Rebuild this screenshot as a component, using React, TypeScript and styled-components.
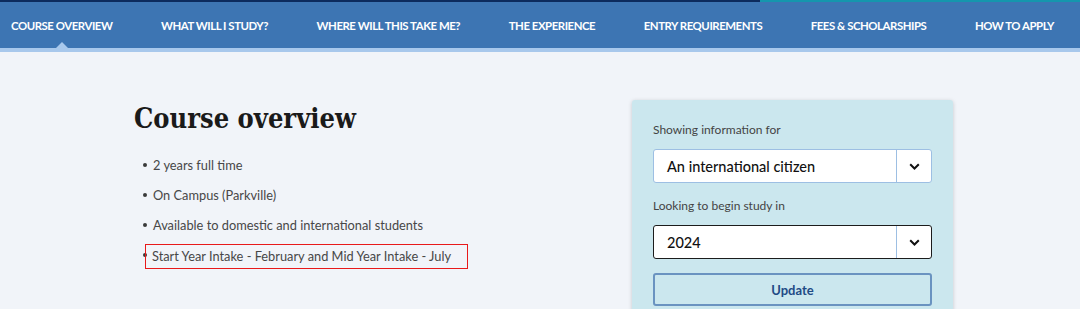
import React from "react";
import styled, { createGlobalStyle } from "styled-components";

const Global = createGlobalStyle`
  html, body { margin: 0; padding: 0; }
  body { background: #f1f4f9; font-family: "Lato", "Liberation Sans", sans-serif; overflow: hidden; }
  * { box-sizing: border-box; }
`;

const Page = styled.div`
  width: 1080px;
  height: 309px;
  overflow: hidden;
`;

const TopStrip = styled.div`
  display: grid;
  grid-template-columns: 760px 1fr;
  height: 2px;
`;
const StripPart = styled.div<{ $c: string }>`
  background: ${(p) => p.$c};
`;

const Nav = styled.nav`
  height: 46px;
  background: #3d75b3;
  border-bottom: 4px solid #a8c8ec;
  box-sizing: content-box;
  display: flex;
  align-items: center;
  justify-content: space-between;
  padding: 0 26px 0 11px;
`;

const NavItem = styled.a<{ $active?: boolean }>`
  position: relative;
  color: #fff;
  font-family: "Lato", sans-serif;
  font-weight: 700;
  font-size: 11.4px;
  letter-spacing: -0.45px;
  text-transform: uppercase;
  white-space: nowrap;
  &::after {
    content: "";
    display: ${(p) => (p.$active ? "block" : "none")};
    position: absolute;
    left: 50%;
    bottom: -17px;
    transform: translateX(-50%);
    border-left: 7px solid transparent;
    border-right: 7px solid transparent;
    border-bottom: 7px solid #a8c8ec;
  }
`;

const Body = styled.div`
  display: flex;
  padding: 48px 0 0 134px;
`;

const Main = styled.div`
  width: 498px;
`;

const Heading = styled.h1`
  margin: 0 0 18px;
  font-family: "DejaVu Serif Condensed", "DejaVu Serif", serif;
  font-stretch: condensed;
  font-weight: 700;
  font-size: 27px;
  line-height: 37px;
  color: #1a1a1a;
`;

const List = styled.ul`
  list-style: none;
  margin: 0;
  padding: 0;
  display: flex;
  flex-direction: column;
  gap: 10px;
`;

const Item = styled.li`
  display: flex;
  align-items: center;
  height: 20px;
  font-size: 12.8px;
  color: #474747;
  &::before {
    content: "";
    width: 4px;
    height: 4px;
    border-radius: 50%;
    background: #3a3a3a;
    margin: 0 6px 0 9px;
    flex: none;
  }
`;

const Highlight = styled.span`
  display: inline-flex;
  align-items: center;
  height: 25px;
  border: 1.5px solid #e8191a;
  padding: 0 16px 0 6px;
  margin-left: -8px;
  margin-top: 2px;
`;

const Card = styled.aside`
  width: 321px;
  height: 260px;
  background: #cbe7ee;
  border-radius: 3px;
  box-shadow: 0 1px 4px rgba(0, 0, 0, 0.18);
  padding: 21px 21px;
`;

const Label = styled.div`
  font-size: 12px;
  color: #444;
  line-height: 18px;
  margin: 0 0 10px;
`;

const Select = styled.div<{ $focus?: boolean }>`
  display: flex;
  height: 34px;
  background: #fff;
  border: 1px solid ${(p) => (p.$focus ? "#1c1c1c" : "#9dbfe3")};
  border-radius: 3px;
  margin-bottom: 14px;
`;

const SelectText = styled.div`
  flex: 1;
  display: flex;
  align-items: center;
  padding-left: 13px;
  font-size: 14.5px;
  font-weight: 500;
  color: #111;
`;

const Chevron = styled.div`
  width: 35px;
  border-left: 1px solid #9dbfe3;
  display: flex;
  align-items: center;
  justify-content: center;
`;

const Button = styled.button`
  display: block;
  width: 100%;
  height: 33px;
  background: transparent;
  border: 2px solid #6a93c0;
  border-radius: 3px;
  font-family: "Lato", sans-serif;
  font-weight: 700;
  font-size: 13px;
  color: #1f4b85;
`;

const ChevronIcon = () => (
  <svg width="11" height="7" viewBox="0 0 11 7">
    <path d="M1.2 1.2 L5.5 5.5 L9.8 1.2" fill="none" stroke="#111" strokeWidth="2" />
  </svg>
);

const navItems = [
  "Course overview",
  "What will I study?",
  "Where will this take me?",
  "The experience",
  "Entry requirements",
  "Fees & scholarships",
  "How to apply",
];

export default function App() {
  return (
    <Page>
      <Global />
      <TopStrip>
        <StripPart $c="#0c2b5e" />
        <StripPart $c="#1596ad" />
      </TopStrip>
      <Nav>
        {navItems.map((n, i) => (
          <NavItem key={n} $active={i === 0}>
            {n}
          </NavItem>
        ))}
      </Nav>
      <Body>
        <Main>
          <Heading>Course overview</Heading>
          <List>
            <Item>2 years full time</Item>
            <Item>On Campus (Parkville)</Item>
            <Item>Available to domestic and international students</Item>
            <Item>
              <Highlight>Start Year Intake - February and Mid Year Intake - July</Highlight>
            </Item>
          </List>
        </Main>
        <Card>
          <Label>Showing information for</Label>
          <Select>
            <SelectText>An international citizen</SelectText>
            <Chevron>
              <ChevronIcon />
            </Chevron>
          </Select>
          <Label>Looking to begin study in</Label>
          <Select $focus>
            <SelectText>2024</SelectText>
            <Chevron>
              <ChevronIcon />
            </Chevron>
          </Select>
          <Button>Update</Button>
        </Card>
      </Body>
    </Page>
  );
}
